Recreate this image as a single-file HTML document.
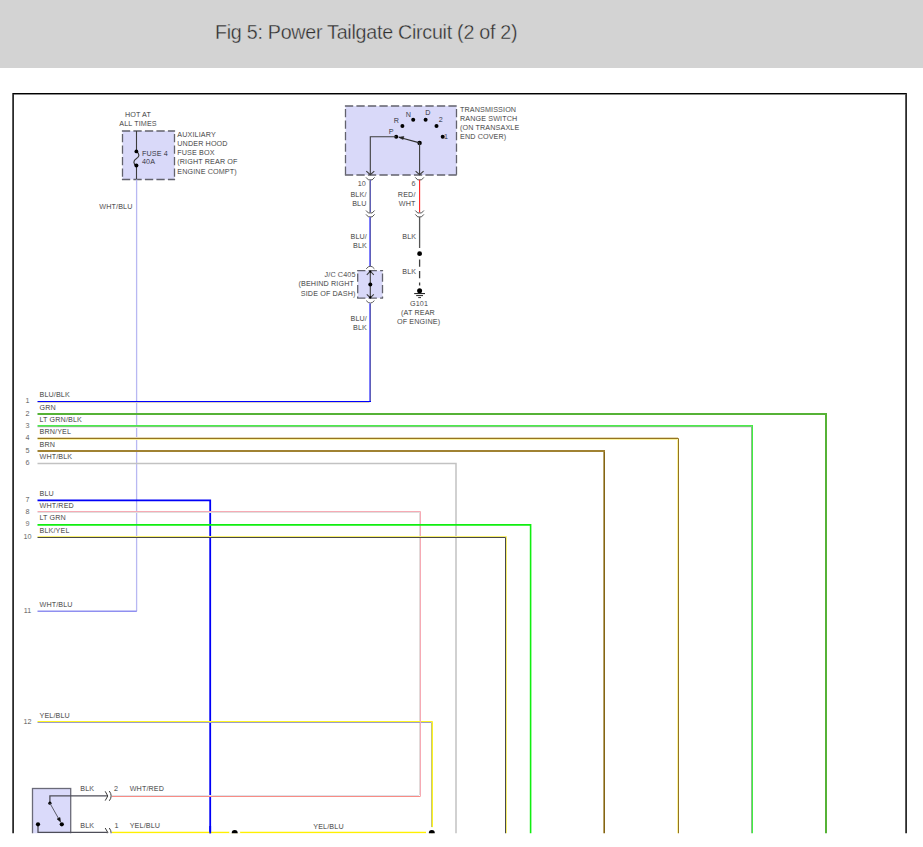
<!DOCTYPE html>
<html><head><meta charset="utf-8"><style>
html,body{margin:0;padding:0;background:#fff;}
body{width:923px;height:847px;overflow:hidden;position:relative;}
.hdr{position:absolute;left:0;top:0;width:923px;height:68px;background:#d3d3d3;}
.ttl{position:absolute;left:215px;top:19.5px;font-family:"Liberation Sans",sans-serif;font-size:19.7px;letter-spacing:-0.27px;line-height:24px;color:#303030;white-space:nowrap;-webkit-text-stroke:0.35px #d3d3d3;}
svg{position:absolute;left:0;top:0;}
svg text{font-family:"Liberation Sans",sans-serif;letter-spacing:0.12px;}
</style></head><body>
<div class="hdr"><div class="ttl">Fig 5: Power Tailgate Circuit (2 of 2)</div></div>
<svg width="923" height="847" viewBox="0 0 923 847">
<defs><clipPath id="cl"><rect x="0" y="68" width="923" height="765.2"/></clipPath></defs>
<g clip-path="url(#cl)">
<rect x="12" y="93" width="895" height="1" fill="#000"/>
<rect x="12" y="94" width="895" height="1" fill="#8a8a8a"/>
<rect x="12" y="93" width="1" height="800" fill="#5a5a5a"/>
<rect x="13" y="94" width="1" height="800" fill="#2a2a2a"/>
<rect x="905" y="94" width="1" height="800" fill="#5a5a5a"/>
<rect x="906" y="93" width="1" height="800" fill="#2a2a2a"/>
<rect x="122.5" y="131" width="52" height="48.5" fill="#d9d9f9"/>
<path d="M121.9,131 H175.1" stroke="#62626c" stroke-width="1.3" stroke-dasharray="8.3 3.2"/>
<path d="M121.9,179.5 H175.1" stroke="#62626c" stroke-width="1.3" stroke-dasharray="8.3 3.2"/>
<path d="M122.5,131 V179.5" stroke="#62626c" stroke-width="1.3" stroke-dasharray="8.3 3.2" stroke-dashoffset="8.6"/>
<path d="M174.5,131 V179.5" stroke="#62626c" stroke-width="1.3" stroke-dasharray="8.3 3.2" stroke-dashoffset="8.6"/>
<line x1="136.5" y1="131" x2="136.5" y2="151.5" stroke="#3c3c3c" stroke-width="1.1" />
<line x1="136.5" y1="165.5" x2="136.5" y2="179.5" stroke="#3c3c3c" stroke-width="1.1" />
<path d="M136.5,151.5 C139.8,153.5 139.5,157 136.5,158.5 C133.0,160.5 133.0,164 136.5,165.6" stroke="#3c3c3c" stroke-width="1.2" fill="none" />
<circle cx="136.4" cy="151.4" r="1.9" fill="#000"/>
<circle cx="136.4" cy="165.6" r="2.0" fill="#000"/>
<text x="142" y="156" text-anchor="start" font-size="7.2" fill="#1a1a1a" stroke="#d9d9f9" stroke-width="0.12">FUSE 4</text>
<text x="142" y="164.2" text-anchor="start" font-size="7.2" fill="#1a1a1a" stroke="#d9d9f9" stroke-width="0.12">40A</text>
<text x="138" y="117" text-anchor="middle" font-size="7.2" fill="#1a1a1a" stroke="#fff" stroke-width="0.12">HOT AT</text>
<text x="138" y="125.8" text-anchor="middle" font-size="7.2" fill="#1a1a1a" stroke="#fff" stroke-width="0.12">ALL TIMES</text>
<text x="177.3" y="136.8" text-anchor="start" font-size="7.2" fill="#1a1a1a" stroke="#fff" stroke-width="0.12">AUXILIARY</text>
<text x="177.3" y="146.0" text-anchor="start" font-size="7.2" fill="#1a1a1a" stroke="#fff" stroke-width="0.12">UNDER HOOD</text>
<text x="177.3" y="155.20000000000002" text-anchor="start" font-size="7.2" fill="#1a1a1a" stroke="#fff" stroke-width="0.12">FUSE BOX</text>
<text x="177.3" y="164.4" text-anchor="start" font-size="7.2" fill="#1a1a1a" stroke="#fff" stroke-width="0.12">(RIGHT REAR OF</text>
<text x="177.3" y="173.60000000000002" text-anchor="start" font-size="7.2" fill="#1a1a1a" stroke="#fff" stroke-width="0.12">ENGINE COMPT)</text>
<text x="132.5" y="208.5" text-anchor="end" font-size="7.2" fill="#1a1a1a" stroke="#fff" stroke-width="0.12">WHT/BLU</text>
<line x1="136.6" y1="179.5" x2="136.6" y2="611.3" stroke="#b8b8f2" stroke-width="1.3" />
<rect x="345.5" y="106" width="111" height="69" fill="#d9d9f9"/>
<path d="M344.9,106 H457.1" stroke="#62626c" stroke-width="1.3" stroke-dasharray="8.3 3.2"/>
<path d="M344.9,175 H457.1" stroke="#62626c" stroke-width="1.3" stroke-dasharray="8.3 3.2"/>
<path d="M345.5,106 V175" stroke="#62626c" stroke-width="1.3" stroke-dasharray="8.3 3.2" stroke-dashoffset="8.6"/>
<path d="M456.5,106 V175" stroke="#62626c" stroke-width="1.3" stroke-dasharray="8.3 3.2" stroke-dashoffset="8.6"/>
<text x="460" y="111.8" text-anchor="start" font-size="7.2" fill="#1a1a1a" stroke="#fff" stroke-width="0.12">TRANSMISSION</text>
<text x="460" y="120.8" text-anchor="start" font-size="7.2" fill="#1a1a1a" stroke="#fff" stroke-width="0.12">RANGE SWITCH</text>
<text x="460" y="129.8" text-anchor="start" font-size="7.2" fill="#1a1a1a" stroke="#fff" stroke-width="0.12">(ON TRANSAXLE</text>
<text x="460" y="138.8" text-anchor="start" font-size="7.2" fill="#1a1a1a" stroke="#fff" stroke-width="0.12">END COVER)</text>
<circle cx="396.2" cy="136.7" r="2.0" fill="#000"/>
<circle cx="402.4" cy="126" r="2.0" fill="#000"/>
<circle cx="413.2" cy="119.8" r="2.0" fill="#000"/>
<circle cx="425.6" cy="119.8" r="2.0" fill="#000"/>
<circle cx="436.5" cy="126" r="2.0" fill="#000"/>
<circle cx="442.7" cy="136.7" r="2.0" fill="#000"/>
<circle cx="419.6" cy="142.9" r="2.2" fill="#000"/>
<text x="388.8" y="133.8" text-anchor="start" font-size="7.2" fill="#1a1a1a" stroke="#d9d9f9" stroke-width="0.12">P</text>
<text x="393.7" y="122.8" text-anchor="start" font-size="7.2" fill="#1a1a1a" stroke="#d9d9f9" stroke-width="0.12">R</text>
<text x="405.7" y="116.6" text-anchor="start" font-size="7.2" fill="#1a1a1a" stroke="#d9d9f9" stroke-width="0.12">N</text>
<text x="425.2" y="114.6" text-anchor="start" font-size="7.2" fill="#1a1a1a" stroke="#d9d9f9" stroke-width="0.12">D</text>
<text x="438.8" y="121.5" text-anchor="start" font-size="7.2" fill="#1a1a1a" stroke="#d9d9f9" stroke-width="0.12">2</text>
<text x="443.9" y="138.5" text-anchor="start" font-size="7.2" fill="#1a1a1a" stroke="#d9d9f9" stroke-width="0.12">1</text>
<path d="M396.2,136.7 H370.3 V174.7" stroke="#3c3c3c" stroke-width="1.1" fill="none" />
<path d="M366.3,171.2 L370.3,174.7 L374.3,171.2" stroke="#3c3c3c" stroke-width="1.1" fill="none" />
<path d="M419.6,142.9 V174.7" stroke="#3c3c3c" stroke-width="1.1" fill="none" />
<path d="M415.6,171.2 L419.6,174.7 L423.6,171.2" stroke="#3c3c3c" stroke-width="1.1" fill="none" />
<path d="M419.6,142.9 L399,137.3" stroke="#303030" stroke-width="1.1" fill="none" />
<path d="M398.6,137.2 L403.9,136.4 L403.1,139.6 Z" stroke="#222" stroke-width="0.5" fill="#222" />
<path d="M366.0,177.4 Q368.8,181.24 370.3,179.8 Q371.8,181.24 374.6,177.4" stroke="#505050" stroke-width="1.0" fill="none" />
<path d="M415.3,177.4 Q418.1,181.24 419.6,179.8 Q421.1,181.24 423.90000000000003,177.4" stroke="#505050" stroke-width="1.0" fill="none" />
<line x1="369.5" y1="179.8" x2="369.5" y2="212.5" stroke="#a4a4b4" stroke-width="1.0" />
<line x1="370.5" y1="179.8" x2="370.5" y2="212.5" stroke="#6060b4" stroke-width="1.0" />
<line x1="419.6" y1="179.8" x2="419.6" y2="212.5" stroke="#ff2020" stroke-width="1.1" />
<path d="M366.0,210.5 Q368.8,214.34 370.3,212.9 Q371.8,214.34 374.6,210.5" stroke="#505050" stroke-width="1.0" fill="none" />
<path d="M366.0,214.4 Q368.8,218.24 370.3,216.8 Q371.8,218.24 374.6,214.4" stroke="#505050" stroke-width="1.0" fill="none" />
<path d="M415.3,210.5 Q418.1,214.34 419.6,212.9 Q421.1,214.34 423.90000000000003,210.5" stroke="#505050" stroke-width="1.0" fill="none" />
<path d="M415.3,214.4 Q418.1,218.24 419.6,216.8 Q421.1,218.24 423.90000000000003,214.4" stroke="#505050" stroke-width="1.0" fill="none" />
<text x="366" y="185.9" text-anchor="end" font-size="7.2" fill="#1a1a1a" stroke="#fff" stroke-width="0.12">10</text>
<text x="366.5" y="196.8" text-anchor="end" font-size="7.2" fill="#1a1a1a" stroke="#fff" stroke-width="0.12">BLK/</text>
<text x="366.5" y="205.5" text-anchor="end" font-size="7.2" fill="#1a1a1a" stroke="#fff" stroke-width="0.12">BLU</text>
<text x="415.5" y="185.9" text-anchor="end" font-size="7.2" fill="#1a1a1a" stroke="#fff" stroke-width="0.12">6</text>
<text x="415.5" y="196.8" text-anchor="end" font-size="7.2" fill="#1a1a1a" stroke="#fff" stroke-width="0.12">RED/</text>
<text x="415.5" y="205.5" text-anchor="end" font-size="7.2" fill="#1a1a1a" stroke="#fff" stroke-width="0.12">WHT</text>
<line x1="369.5" y1="217" x2="369.5" y2="266.5" stroke="#7c7cfc" stroke-width="1.0" />
<line x1="370.5" y1="217" x2="370.5" y2="266.5" stroke="#5e5eb8" stroke-width="1.0" />
<text x="367" y="239" text-anchor="end" font-size="7.2" fill="#1a1a1a" stroke="#fff" stroke-width="0.12">BLU/</text>
<text x="367" y="247.8" text-anchor="end" font-size="7.2" fill="#1a1a1a" stroke="#fff" stroke-width="0.12">BLK</text>
<path d="M366.2,268.8 Q370.3,263.6 374.4,268.8" stroke="#5a5a5a" stroke-width="1.0" fill="none" />
<rect x="357.7" y="270.6" width="24.8" height="27.5" fill="#d9d9f9"/>
<path d="M357.09999999999997,270.6 H383.1" stroke="#62626c" stroke-width="1.3" stroke-dasharray="8.3 3.2"/>
<path d="M357.09999999999997,298.1 H383.1" stroke="#62626c" stroke-width="1.3" stroke-dasharray="8.3 3.2"/>
<path d="M357.7,270.6 V298.1" stroke="#62626c" stroke-width="1.3" stroke-dasharray="8.3 3.2" stroke-dashoffset="8.6"/>
<path d="M382.5,270.6 V298.1" stroke="#62626c" stroke-width="1.3" stroke-dasharray="8.3 3.2" stroke-dashoffset="8.6"/>
<line x1="370.3" y1="271.2" x2="370.3" y2="297.8" stroke="#3c3c3c" stroke-width="1.1" />
<path d="M366.8,274.8 L370.3,271.2 L373.8,274.8" stroke="#3c3c3c" stroke-width="1.1" fill="none" />
<path d="M366.8,294.3 L370.3,297.8 L373.8,294.3" stroke="#3c3c3c" stroke-width="1.1" fill="none" />
<circle cx="370.3" cy="284.4" r="2.0" fill="#000"/>
<circle cx="370.3" cy="271.6" r="1.1" fill="#000"/>
<circle cx="370.3" cy="297.4" r="1.1" fill="#000"/>
<path d="M366.2,300.6 Q370.3,305.6 374.4,300.6" stroke="#5a5a5a" stroke-width="1.0" fill="none" />
<text x="355.5" y="276.8" text-anchor="end" font-size="7.2" fill="#1a1a1a" stroke="#fff" stroke-width="0.12">J/C C405</text>
<text x="354" y="286" text-anchor="end" font-size="7.2" fill="#1a1a1a" stroke="#fff" stroke-width="0.12">(BEHIND RIGHT</text>
<text x="355.5" y="295.8" text-anchor="end" font-size="7.2" fill="#1a1a1a" stroke="#fff" stroke-width="0.12">SIDE OF DASH)</text>
<line x1="369.5" y1="303.3" x2="369.5" y2="401" stroke="#7c7cfc" stroke-width="1.0" />
<line x1="370.5" y1="303.3" x2="370.5" y2="401" stroke="#5e5eb8" stroke-width="1.0" />
<text x="367" y="321.2" text-anchor="end" font-size="7.2" fill="#1a1a1a" stroke="#fff" stroke-width="0.12">BLU/</text>
<text x="367" y="330.3" text-anchor="end" font-size="7.2" fill="#1a1a1a" stroke="#fff" stroke-width="0.12">BLK</text>
<line x1="419.6" y1="217" x2="419.6" y2="248" stroke="#555" stroke-width="1.3" />
<circle cx="419.6" cy="253.7" r="2.4" fill="#000"/>
<line x1="419.6" y1="259.6" x2="419.6" y2="285.5" stroke="#3e3e3e" stroke-width="1.3" stroke-dasharray="7.2 4.2"/>
<text x="416.2" y="238.9" text-anchor="end" font-size="7.2" fill="#1a1a1a" stroke="#fff" stroke-width="0.12">BLK</text>
<text x="416.2" y="273.8" text-anchor="end" font-size="7.2" fill="#1a1a1a" stroke="#fff" stroke-width="0.12">BLK</text>
<circle cx="419.6" cy="290.7" r="2.5" fill="#000"/>
<line x1="414.2" y1="293.6" x2="425" y2="293.6" stroke="#111" stroke-width="1.0" />
<line x1="416.2" y1="295.6" x2="423" y2="295.6" stroke="#222" stroke-width="1.0" />
<line x1="418.2" y1="297.6" x2="421" y2="297.6" stroke="#333" stroke-width="1.0" />
<text x="419" y="305.7" text-anchor="middle" font-size="7.2" fill="#1a1a1a" stroke="#fff" stroke-width="0.12">G101</text>
<text x="418" y="314.8" text-anchor="middle" font-size="7.2" fill="#1a1a1a" stroke="#fff" stroke-width="0.12">(AT REAR</text>
<text x="418.6" y="323.6" text-anchor="middle" font-size="7.2" fill="#1a1a1a" stroke="#fff" stroke-width="0.12">OF ENGINE)</text>
<text x="27.6" y="402.8" text-anchor="middle" font-size="7.2" fill="#404040" stroke="#fff" stroke-width="0.12">1</text>
<text x="39.5" y="397.1" text-anchor="start" font-size="7.2" fill="#1a1a1a" stroke="#fff" stroke-width="0.12">BLU/BLK</text>
<text x="27.6" y="415.5" text-anchor="middle" font-size="7.2" fill="#404040" stroke="#fff" stroke-width="0.12">2</text>
<text x="39.5" y="409.8" text-anchor="start" font-size="7.2" fill="#1a1a1a" stroke="#fff" stroke-width="0.12">GRN</text>
<text x="27.6" y="427.5" text-anchor="middle" font-size="7.2" fill="#404040" stroke="#fff" stroke-width="0.12">3</text>
<text x="39.5" y="421.8" text-anchor="start" font-size="7.2" fill="#1a1a1a" stroke="#fff" stroke-width="0.12">LT GRN/BLK</text>
<text x="27.6" y="440.0" text-anchor="middle" font-size="7.2" fill="#404040" stroke="#fff" stroke-width="0.12">4</text>
<text x="39.5" y="434.3" text-anchor="start" font-size="7.2" fill="#1a1a1a" stroke="#fff" stroke-width="0.12">BRN/YEL</text>
<text x="27.6" y="452.5" text-anchor="middle" font-size="7.2" fill="#404040" stroke="#fff" stroke-width="0.12">5</text>
<text x="39.5" y="446.8" text-anchor="start" font-size="7.2" fill="#1a1a1a" stroke="#fff" stroke-width="0.12">BRN</text>
<text x="27.6" y="464.8" text-anchor="middle" font-size="7.2" fill="#404040" stroke="#fff" stroke-width="0.12">6</text>
<text x="39.5" y="459.1" text-anchor="start" font-size="7.2" fill="#1a1a1a" stroke="#fff" stroke-width="0.12">WHT/BLK</text>
<text x="27.6" y="501.9" text-anchor="middle" font-size="7.2" fill="#404040" stroke="#fff" stroke-width="0.12">7</text>
<text x="39.5" y="496.2" text-anchor="start" font-size="7.2" fill="#1a1a1a" stroke="#fff" stroke-width="0.12">BLU</text>
<text x="27.6" y="513.5" text-anchor="middle" font-size="7.2" fill="#404040" stroke="#fff" stroke-width="0.12">8</text>
<text x="39.5" y="507.8" text-anchor="start" font-size="7.2" fill="#1a1a1a" stroke="#fff" stroke-width="0.12">WHT/RED</text>
<text x="27.6" y="526.1" text-anchor="middle" font-size="7.2" fill="#404040" stroke="#fff" stroke-width="0.12">9</text>
<text x="39.5" y="520.4" text-anchor="start" font-size="7.2" fill="#1a1a1a" stroke="#fff" stroke-width="0.12">LT GRN</text>
<text x="27.6" y="538.8" text-anchor="middle" font-size="7.2" fill="#404040" stroke="#fff" stroke-width="0.12">10</text>
<text x="39.5" y="533.0999999999999" text-anchor="start" font-size="7.2" fill="#1a1a1a" stroke="#fff" stroke-width="0.12">BLK/YEL</text>
<text x="27.6" y="612.8" text-anchor="middle" font-size="7.2" fill="#404040" stroke="#fff" stroke-width="0.12">11</text>
<text x="39.5" y="607.0999999999999" text-anchor="start" font-size="7.2" fill="#1a1a1a" stroke="#fff" stroke-width="0.12">WHT/BLU</text>
<text x="27.6" y="723.5" text-anchor="middle" font-size="7.2" fill="#404040" stroke="#fff" stroke-width="0.12">12</text>
<text x="39.5" y="717.8" text-anchor="start" font-size="7.2" fill="#1a1a1a" stroke="#fff" stroke-width="0.12">YEL/BLU</text>
<line x1="37.5" y1="401.5" x2="371" y2="401.5" stroke="#0000ff" stroke-width="1.0" />
<line x1="37.5" y1="402.5" x2="369.5" y2="402.5" stroke="#d8d0c4" stroke-width="1.0" />
<path d="M37.5,414 H826 V840" stroke="#56b236" stroke-width="2.0" fill="none" />
<line x1="37.5" y1="425.5" x2="753" y2="425.5" stroke="#4cec4c" stroke-width="1.0" />
<line x1="37.5" y1="426.5" x2="751" y2="426.5" stroke="#74cc74" stroke-width="1.0" />
<line x1="37.5" y1="427.5" x2="751" y2="427.5" stroke="#f2e6f2" stroke-width="1.0" />
<line x1="752.5" y1="425" x2="752.5" y2="840" stroke="#40f040" stroke-width="1.0" />
<line x1="751.5" y1="426" x2="751.5" y2="840" stroke="#8cbc8c" stroke-width="1.0" />
<line x1="37.5" y1="437.5" x2="678" y2="437.5" stroke="#e4d8b8" stroke-width="1.0" />
<path d="M37.5,438.5 H678.5 V840" stroke="#947420" stroke-width="1.0" fill="none" />
<path d="M37.5,439.5 H677.5 V840" stroke="#fcf49c" stroke-width="1.0" fill="none" />
<line x1="37.5" y1="451" x2="605" y2="451" stroke="#a08232" stroke-width="2.0" />
<line x1="604.5" y1="452" x2="604.5" y2="840" stroke="#846414" stroke-width="1.0" />
<line x1="603.5" y1="452" x2="603.5" y2="840" stroke="#b8a46c" stroke-width="1.0" />
<path d="M37.5,463.5 H456 V840" stroke="#c2c2c2" stroke-width="1.5" fill="none" />
<path d="M37.5,500.4 H210.2 V840" stroke="#0000f8" stroke-width="1.8" fill="none" />
<path d="M37.5,511.5 H420.5 V796" stroke="#f6aab4" stroke-width="1.0" fill="none" />
<line x1="37.5" y1="512.5" x2="419" y2="512.5" stroke="#e0dede" stroke-width="1.0" />
<line x1="419.5" y1="512" x2="419.5" y2="795" stroke="#e2dada" stroke-width="1.0" />
<line x1="112" y1="796.5" x2="420.5" y2="796.5" stroke="#f88c84" stroke-width="1.0" />
<line x1="112" y1="795.5" x2="419" y2="795.5" stroke="#dfe1e8" stroke-width="1.0" />
<path d="M37.5,524.9 H530.6 V840" stroke="#10ee10" stroke-width="1.6" fill="none" />
<path d="M37.5,536.5 H506.5 V840" stroke="#f8f070" stroke-width="1.0" fill="none" />
<path d="M37.5,537.5 H505.5 V840" stroke="#484848" stroke-width="1.0" fill="none" />
<path d="M37.5,611.3 H136.8" stroke="#8f8ff0" stroke-width="1.5" fill="none" />
<path d="M37.5,721.5 H432.5 V840" stroke="#fcf420" stroke-width="1.0" fill="none" />
<line x1="37.5" y1="722.5" x2="431.5" y2="722.5" stroke="#9c9cc8" stroke-width="1.0" />
<line x1="431.5" y1="722.5" x2="431.5" y2="840" stroke="#c8c474" stroke-width="1.0" />
<line x1="420.5" y1="718" x2="420.5" y2="726" stroke="#f6aab4" stroke-width="1.0" />
<rect x="32.5" y="788.5" width="38.2" height="60" fill="#dadafa" stroke="#6a6a78" stroke-width="1.3"/>
<path d="M49.9,803.2 V795.8 H107.5" stroke="#4e4e58" stroke-width="1.3" fill="none" />
<path d="M38,824.3 V832.4 H107.5" stroke="#4e4e58" stroke-width="1.3" fill="none" />
<circle cx="49.9" cy="803.2" r="1.6" fill="#000"/>
<circle cx="38" cy="824.3" r="2.1" fill="#000"/>
<circle cx="61.8" cy="824.3" r="2.1" fill="#000"/>
<path d="M49.9,803.2 L59.0,819.3" stroke="#5a5a68" stroke-width="1.0" fill="none" />
<path d="M60.6,822.0 L60.0,817.4 L57.0,819.0 Z" stroke="#111" stroke-width="0.5" fill="#111" />
<text x="80.3" y="791.2" text-anchor="start" font-size="7.2" fill="#1a1a1a" stroke="#fff" stroke-width="0.12">BLK</text>
<text x="80.3" y="827.9" text-anchor="start" font-size="7.2" fill="#1a1a1a" stroke="#fff" stroke-width="0.12">BLK</text>
<text x="114" y="791.2" text-anchor="start" font-size="7.2" fill="#1a1a1a" stroke="#fff" stroke-width="0.12">2</text>
<text x="114.5" y="827.9" text-anchor="start" font-size="7.2" fill="#1a1a1a" stroke="#fff" stroke-width="0.12">1</text>
<text x="129.7" y="791.2" text-anchor="start" font-size="7.2" fill="#1a1a1a" stroke="#fff" stroke-width="0.12">WHT/RED</text>
<text x="129.7" y="827.9" text-anchor="start" font-size="7.2" fill="#1a1a1a" stroke="#fff" stroke-width="0.12">YEL/BLU</text>
<path d="M105.2,791.3 L107.8,796 L105.2,800.6" stroke="#3c3c3c" stroke-width="1.0" fill="none" />
<path d="M109.3,791 Q113,796 109.3,800.8" stroke="#3c3c3c" stroke-width="1.0" fill="none" />
<path d="M105.2,828 L107.8,832.5 L105.2,837" stroke="#3c3c3c" stroke-width="1.0" fill="none" />
<path d="M109.3,828 Q113,833 109.3,838" stroke="#3c3c3c" stroke-width="1.0" fill="none" />
<line x1="112" y1="832.6" x2="426" y2="832.6" stroke="#fff000" stroke-width="1.6" />
<line x1="210.2" y1="826" x2="210.2" y2="840" stroke="#0000f8" stroke-width="1.8" />
<text x="328.5" y="828.5" text-anchor="middle" font-size="7.2" fill="#1a1a1a" stroke="#fff" stroke-width="0.12">YEL/BLU</text>
<circle cx="234.7" cy="832.8" r="5.5" fill="#fff"/>
<circle cx="234.7" cy="833" r="3.0" fill="#000"/>
<circle cx="431.8" cy="832.8" r="5.8" fill="#fff"/>
<circle cx="431.8" cy="833" r="3.0" fill="#000"/>
</g>
</svg>
</body></html>
